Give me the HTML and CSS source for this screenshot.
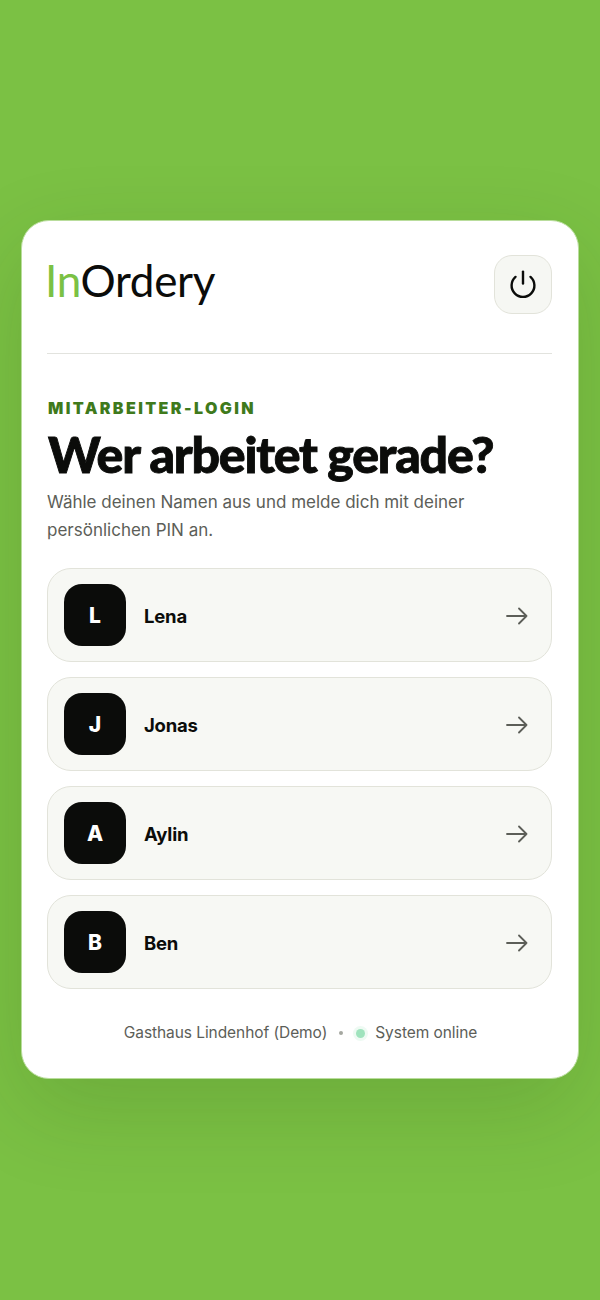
FILE: index.html
```html
<!DOCTYPE html>
<html lang="de">
<head>
  <meta charset="UTF-8">
  <meta name="viewport" content="width=device-width, initial-scale=1.0">
  <title>InOrdery Login</title>
  <link rel="stylesheet" href="styles.css">
</head>
<body>
  <div class="card">
    <div class="top">
      <div class="logo"><span class="logo-in">In</span>Ordery</div>
      <button class="power">
        <svg width="28" height="30" viewBox="0 0 28 30" fill="none" stroke="#0b0c0a" stroke-width="2.4" stroke-linecap="round">
          <path d="M14 1.6v12"/>
          <path d="M6.5 6.9a11.4 11.4 0 1 0 15 0"/>
        </svg>
      </button>
    </div>

    <div class="eyebrow">MITARBEITER-LOGIN</div>
    <h1>Wer arbeitet gerade?</h1>
    <p class="intro">Wähle deinen Namen aus und melde dich mit deiner persönlichen PIN an.</p>

    <div class="staff">
      <div class="row">
        <div class="avatar">L</div>
        <div class="name">Lena</div>
        <svg class="arrow" width="24" height="20" viewBox="0 0 24 20" fill="none" stroke="#5c5e58" stroke-width="1.8" stroke-linecap="round" stroke-linejoin="round"><path d="M2 10h19.5M14 2.5 21.5 10 14 17.5"/></svg>
      </div>
      <div class="row">
        <div class="avatar">J</div>
        <div class="name">Jonas</div>
        <svg class="arrow" width="24" height="20" viewBox="0 0 24 20" fill="none" stroke="#5c5e58" stroke-width="1.8" stroke-linecap="round" stroke-linejoin="round"><path d="M2 10h19.5M14 2.5 21.5 10 14 17.5"/></svg>
      </div>
      <div class="row">
        <div class="avatar">A</div>
        <div class="name">Aylin</div>
        <svg class="arrow" width="24" height="20" viewBox="0 0 24 20" fill="none" stroke="#5c5e58" stroke-width="1.8" stroke-linecap="round" stroke-linejoin="round"><path d="M2 10h19.5M14 2.5 21.5 10 14 17.5"/></svg>
      </div>
      <div class="row">
        <div class="avatar">B</div>
        <div class="name">Ben</div>
        <svg class="arrow" width="24" height="20" viewBox="0 0 24 20" fill="none" stroke="#5c5e58" stroke-width="1.8" stroke-linecap="round" stroke-linejoin="round"><path d="M2 10h19.5M14 2.5 21.5 10 14 17.5"/></svg>
      </div>
    </div>

    <div class="foot">
      <span>Gasthaus Lindenhof (Demo)</span>
      <span class="sep"></span>
      <span class="dot"></span>
      <span>System online</span>
    </div>
  </div>
</body>
</html>
```

FILE: styles.css
```css
* {
  box-sizing: border-box;
}
body {
  margin: 0;
  height: 1300px;
  padding: 220px 21px 0;
  background: #7bc144;
  font-family: Inter, "Liberation Sans", sans-serif;
  color: #0b0c0a;
}
.card {
  height: 859px;
  padding: 34px 26px 0 25px;
  background: #fff;
  border: 1px solid #b9dd9c;
  border-radius: 28px;
  box-shadow: 0 30px 90px rgba(30, 60, 10, 0.16);
}
.top {
  display: flex;
  justify-content: space-between;
  align-items: flex-start;
  height: 99px;
  border-bottom: 1px solid #e2e3de;
}
.logo {
  margin: -2px 0 0 -2px;
  font-family: Lato, sans-serif;
  font-size: 44px;
  line-height: 54px;
  letter-spacing: -0.3px;
  color: #0b0c0a;
}
.logo-in {
  color: #7bc144;
}
.power {
  display: flex;
  align-items: center;
  justify-content: center;
  width: 58px;
  height: 59px;
  padding: 0;
  background: #f6f7f3;
  border: 1px solid #e2e3da;
  border-radius: 18px;
}
.eyebrow {
  margin: 45px 0 0 1px;
  font-size: 16px;
  line-height: 18px;
  font-weight: 900;
  letter-spacing: 2.4px;
  color: #3f7a1c;
}
h1 {
  margin: 9px 0 0 1px;
  font-family: Lato, sans-serif;
  font-size: 50px;
  line-height: 56px;
  font-weight: 900;
  letter-spacing: -1.2px;
  -webkit-text-stroke: 0.9px #0b0c0a;
  white-space: nowrap;
}
.intro {
  margin: 6px 0 0;
  font-size: 17px;
  line-height: 28px;
  color: #5c5e58;
}
.staff {
  display: flex;
  flex-direction: column;
  gap: 15px;
  margin-top: 24px;
}
.row {
  display: flex;
  align-items: center;
  height: 94px;
  padding: 0 22px 0 16px;
  background: #f7f8f4;
  border: 1px solid #e2e3da;
  border-radius: 24px;
}
.avatar {
  display: flex;
  align-items: center;
  justify-content: center;
  width: 62px;
  height: 62px;
  background: #0b0c0a;
  border-radius: 18px;
  color: #fff;
  font-size: 21px;
  font-weight: 800;
}
.name {
  flex: 1;
  margin: 1px 0 0 18px;
  font-size: 18.5px;
  font-weight: 700;
  letter-spacing: -0.2px;
}
.arrow {
  margin-top: 2px;
}
.foot {
  display: flex;
  align-items: center;
  justify-content: center;
  margin-top: 33px;
  padding-left: 2px;
  font-size: 15.5px;
  line-height: 22px;
  letter-spacing: -0.07px;
  color: #5c5e58;
}
.sep {
  width: 4px;
  height: 4px;
  margin: 0 13px 0 12px;
  background: #a5a7a0;
  border-radius: 50%;
}
.dot {
  width: 9px;
  height: 9px;
  margin-right: 10px;
  background: #9fe3bd;
  border-radius: 50%;
  box-shadow: 0 0 0 3px #eefaf3;
}
```
